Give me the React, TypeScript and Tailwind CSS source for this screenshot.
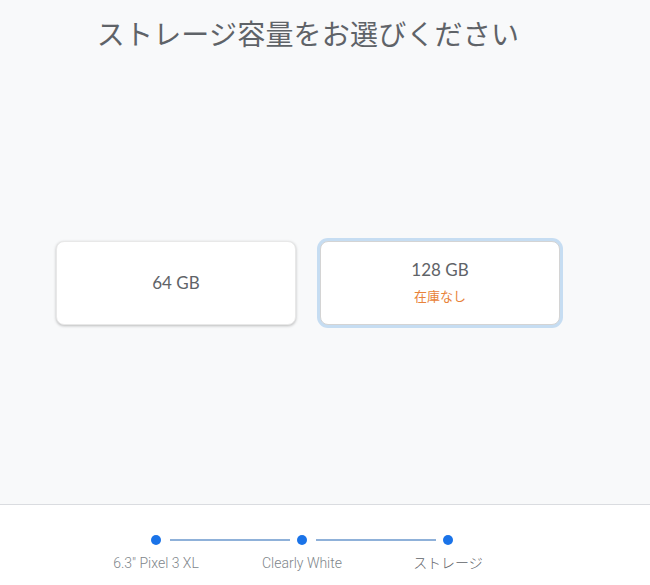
import React from 'react';

const steps = ['6.3" Pixel 3 XL', 'Clearly White', 'ストレージ'];

const App: React.FC = () => {
  return (
    <div className="w-[650px] h-[585px] flex flex-col bg-white font-['Roboto','Noto_Sans_CJK_JP',sans-serif]">
      <div className="h-[504px] bg-[#f8f9fa] shrink-0">
        <div className="w-[616px] flex flex-col items-center">
          <h1 className="pt-[16px] text-[28px] leading-[34px] font-normal text-[#5f6368] tracking-[0.2px] font-['Noto_Sans_CJK_JP',sans-serif]">
            ストレージ容量をお選びください
          </h1>

          <div className="mt-[191px] flex gap-6">
            <button className="w-[240px] h-[84px] bg-white rounded-lg border border-[#e8e8e8] shadow-[0_1px_3px_rgba(0,0,0,0.25)] flex items-center justify-center">
              <span className="text-[17px] text-[#5f6368] font-['Lato','Noto_Sans_CJK_JP',sans-serif]">64 GB</span>
            </button>
            <button className="w-[240px] h-[84px] bg-white rounded-lg border border-[#d4d4d4] ring-[3px] ring-[#c6ddf2] shadow-[0_1px_2px_rgba(0,0,0,0.15)] flex flex-col items-center justify-center gap-[6px]">
              <span className="-mt-[3px] text-[17px] leading-[22px] text-[#5f6368] font-['Lato','Noto_Sans_CJK_JP',sans-serif]">128 GB</span>
              <span className="text-[13px] leading-[18px] text-[#e8833a] font-['Noto_Sans_CJK_JP',sans-serif]">在庫なし</span>
            </button>
          </div>
        </div>
      </div>

      <footer className="flex-1 border-t border-[#dadce0] bg-white">
        <div className="mt-[30px] ml-[151px] flex items-center">
          <div className="w-[10px] h-[10px] rounded-full bg-[#1a73e8]" />
          <div className="ml-[9px] w-[120px] h-[2px] bg-[#8fb1d9]" />
          <div className="ml-[7px] w-[10px] h-[10px] rounded-full bg-[#1a73e8]" />
          <div className="ml-[9px] w-[120px] h-[2px] bg-[#8fb1d9]" />
          <div className="ml-[7px] w-[10px] h-[10px] rounded-full bg-[#1a73e8]" />
        </div>
        <div className="ml-[83px] mt-[9px] grid grid-cols-[146px_146px_146px]">
          {steps.map((s, i) => (
            <span
              key={s}
              className={`text-center text-[14px] leading-[19px] font-light ${i === 2 ? 'text-[#5f6368]' : 'text-[#80868b]'}`}
            >
              {s}
            </span>
          ))}
        </div>
      </footer>
    </div>
  );
};

export default App;
